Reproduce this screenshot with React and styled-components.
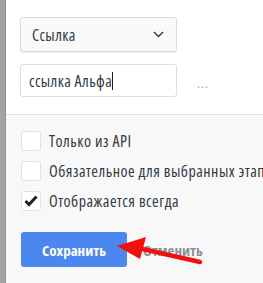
import React from 'react';
import styled, { createGlobalStyle } from 'styled-components';

const Global = createGlobalStyle`
  html, body {
    margin: 0;
    padding: 0;
    background: #ffffff;
  }
  body {
    font-family: "Open Sans", "Noto Sans", sans-serif;
    font-stretch: condensed;
    color: #333a44;
  }
`;

const Frame = styled.div`
  position: relative;
  display: flex;
  width: 263px;
  height: 283px;
  overflow: hidden;
`;

const Strip = styled.div`
  width: 5px;
  flex: none;
  background: #a3a3a3;
  border-right: 1px solid #8f8f8f;
`;

const Main = styled.div`
  flex: 1;
  display: flex;
  flex-direction: column;
  min-width: 0;
`;

const Top = styled.div`
  display: flex;
  flex-direction: column;
  gap: 12px;
  padding: 17px 0 17px 14px;
  background: #ffffff;
`;

const Bottom = styled.div`
  flex: 1;
  display: flex;
  flex-direction: column;
  padding: 16px 0 0 15px;
  background: #f8f8f8;
  border-top: 1px solid #e2e2e2;
`;

const Select = styled.div`
  box-sizing: border-box;
  width: 157px;
  height: 35px;
  display: flex;
  align-items: center;
  justify-content: space-between;
  padding: 0 12px 0 11px;
  background: #f9f9f9;
  border: 1px solid #dcdcdc;
  border-radius: 3px;
  box-shadow: 0 1px 1px rgba(0, 0, 0, 0.08);
  font-size: 16px;
  letter-spacing: 0.4px;
`;

const InputRow = styled.div`
  display: flex;
  align-items: center;
  gap: 20px;
`;

const Input = styled.div`
  box-sizing: border-box;
  width: 157px;
  height: 33px;
  display: flex;
  align-items: center;
  padding: 0 8px;
  background: #ffffff;
  border: 1px solid #dedede;
  border-radius: 3px;
  font-size: 16px;
  letter-spacing: 0.4px;
  white-space: nowrap;
`;

const Caret = styled.span`
  display: inline-block;
  width: 1px;
  height: 18px;
  background: #222;
`;

const Dots = styled.span`
  color: #8d949c;
  font-size: 13px;
  letter-spacing: 1px;
  margin-top: 4px;
`;

const Checks = styled.div`
  display: flex;
  flex-direction: column;
  gap: 10px;
`;

const CheckRow = styled.label`
  display: flex;
  align-items: center;
  gap: 8px;
  height: 20px;
  font-size: 16px;
  letter-spacing: 0.5px;
  white-space: nowrap;
`;

const Box = styled.span`
  box-sizing: border-box;
  width: 20px;
  height: 20px;
  flex: none;
  display: flex;
  align-items: center;
  justify-content: center;
  background: #ffffff;
  border: 1px solid #e2e2e2;
  border-radius: 3px;
`;

const Actions = styled.div`
  display: flex;
  align-items: center;
  gap: 16px;
  margin-top: 21px;
`;

const Primary = styled.button`
  width: 106px;
  height: 35px;
  border: none;
  border-radius: 3px;
  background: #4c87ef;
  color: #ffffff;
  font-family: inherit;
  font-stretch: inherit;
  font-size: 15px;
  font-weight: 700;
`;

const Cancel = styled.span`
  color: #8a9199;
  font-size: 15px;
  font-weight: 700;
`;

const Arrow = styled.svg`
  position: absolute;
  left: 0;
  top: 0;
  pointer-events: none;
`;

const Check = ({ checked, children }) => (
  <CheckRow>
    <Box>
      {checked && (
        <svg width="14" height="12" viewBox="0 0 14 12">
          <path d="M1.5 6 L5 9.5 L12.5 1.5" fill="none" stroke="#1f2329" strokeWidth="3" />
        </svg>
      )}
    </Box>
    {children}
  </CheckRow>
);

export default function App() {
  return (
    <>
      <Global />
      <Frame>
        <Strip />
        <Main>
          <Top>
            <Select>
              <span>Ссылка</span>
              <svg width="11" height="7" viewBox="0 0 11 7">
                <path d="M1 1 L5.5 5.5 L10 1" fill="none" stroke="#333" strokeWidth="1.4" />
              </svg>
            </Select>
            <InputRow>
              <Input>
                ссылка Альфа<Caret />
              </Input>
              <Dots>...</Dots>
            </InputRow>
          </Top>
          <Bottom>
            <Checks>
              <Check>Только из API</Check>
              <Check>Обязательное для выбранных этапов</Check>
              <Check checked>Отображается всегда</Check>
            </Checks>
            <Actions>
              <Primary>Сохранить</Primary>
              <Cancel>Отменить</Cancel>
            </Actions>
          </Bottom>
        </Main>
        <Arrow width="263" height="283" viewBox="0 0 263 283">
          <path d="M200 262 L138 248" stroke="#f01010" strokeWidth="4.5" strokeLinecap="round" />
          <path d="M117 246 L146 237 L140 259 Z" fill="#f01010" />
        </Arrow>
      </Frame>
    </>
  );
}
